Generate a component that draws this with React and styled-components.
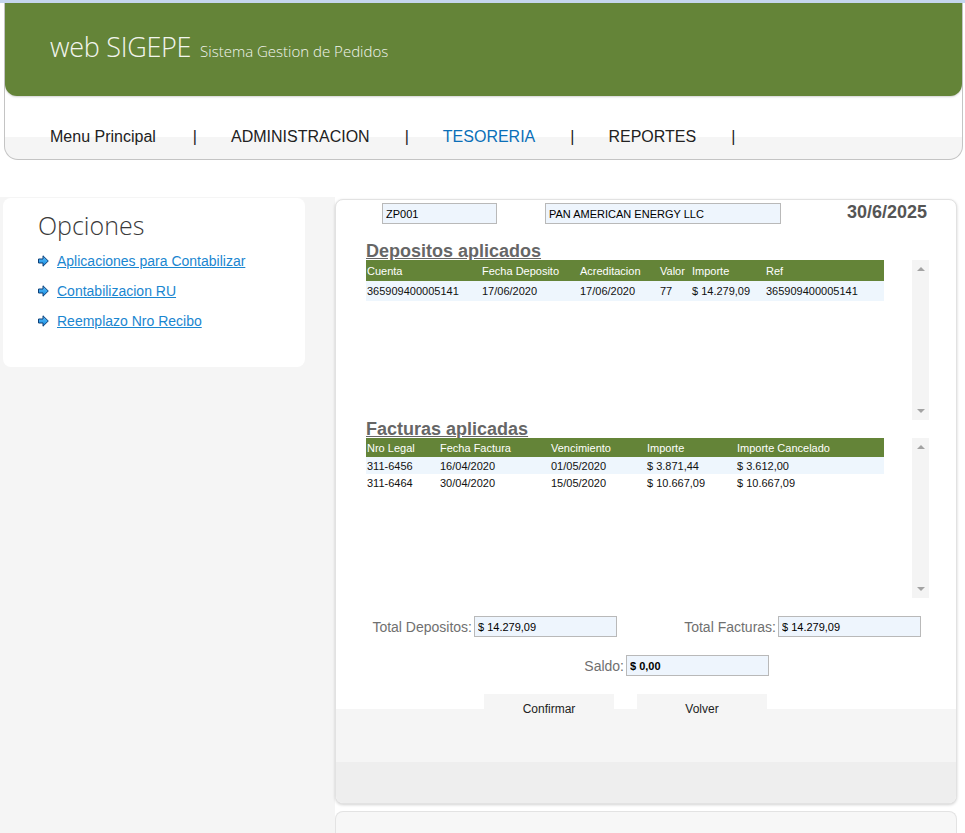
import React from "react";
import styled, { createGlobalStyle } from "styled-components";

const GlobalStyle = createGlobalStyle`
  html, body {
    margin: 0;
    padding: 0;
    background: #ffffff;
    font-family: "Liberation Sans", Arial, sans-serif;
  }
`;

const depositos = [
  {
    cuenta: "365909400005141",
    fecha: "17/06/2020",
    acreditacion: "17/06/2020",
    valor: "77",
    importe: "$ 14.279,09",
    ref: "365909400005141",
  },
];

const facturas = [
  { nro: "311-6456", fecha: "16/04/2020", venc: "01/05/2020", importe: "$ 3.871,44", cancelado: "$ 3.612,00" },
  { nro: "311-6464", fecha: "30/04/2020", venc: "15/05/2020", importe: "$ 10.667,09", cancelado: "$ 10.667,09" },
];

const depCols = [115, 98, 80, 32, 74, 119];
const facCols = [73, 111, 96, 90, 148];

const ArrowIcon = () => (
  <svg width="11" height="12" viewBox="0 0 11 12">
    <defs>
      <linearGradient id="arr" x1="0" y1="0" x2="0" y2="1">
        <stop offset="0" stopColor="#5cc3ff" />
        <stop offset="1" stopColor="#1487dc" />
      </linearGradient>
    </defs>
    <polygon
      points="0.5,4 5,4 5,0.8 10.3,6 5,11.2 5,8 0.5,8"
      fill="url(#arr)"
      stroke="#0d3f78"
      strokeWidth="1"
      strokeLinejoin="miter"
    />
  </svg>
);

const App = () => {
  return (
    <>
      <GlobalStyle />
      <TopStrip />
      <Header>
        <Banner>
          <Brand>web SIGEPE</Brand>
          <Tagline>Sistema Gestion de Pedidos</Tagline>
        </Banner>
        <Nav>
          <NavItem $gap={37}>Menu Principal</NavItem>
          <Sep>|</Sep>
          <NavItem>ADMINISTRACION</NavItem>
          <Sep>|</Sep>
          <NavItem $active>TESORERIA</NavItem>
          <Sep>|</Sep>
          <NavItem>REPORTES</NavItem>
          <Sep>|</Sep>
        </Nav>
      </Header>

      <Main>
        <Side>
          <OptionsCard>
            <OptionsTitle>Opciones</OptionsTitle>
            <OptionLink>
              <ArrowIcon />
              <a href="#">Aplicaciones para Contabilizar</a>
            </OptionLink>
            <OptionLink>
              <ArrowIcon />
              <a href="#">Contabilizacion RU</a>
            </OptionLink>
            <OptionLink>
              <ArrowIcon />
              <a href="#">Reemplazo Nro Recibo</a>
            </OptionLink>
          </OptionsCard>
        </Side>

        <Column>
          <Panel>
            <TopRow>
              <Field $w={115} value="ZP001" readOnly />
              <Field $w={236} value="PAN AMERICAN ENERGY LLC" readOnly />
              <DateLabel>30/6/2025</DateLabel>
            </TopRow>

            <Content>
              <SectionTitle $mt={18}>Depositos aplicados</SectionTitle>
              <ScrollBox>
                <Grid>
                  <colgroup>
                    {depCols.map((w, i) => (
                      <col key={i} style={{ width: w }} />
                    ))}
                  </colgroup>
                  <thead>
                    <HeadRow $h={21}>
                      <th>Cuenta</th>
                      <th>Fecha Deposito</th>
                      <th>Acreditacion</th>
                      <th>Valor</th>
                      <th>Importe</th>
                      <th>Ref</th>
                    </HeadRow>
                  </thead>
                  <tbody>
                    {depositos.map((d, i) => (
                      <Row key={i} $h={20} $alt={i % 2 === 0}>
                        <td>{d.cuenta}</td>
                        <td>{d.fecha}</td>
                        <td>{d.acreditacion}</td>
                        <td>{d.valor}</td>
                        <td>{d.importe}</td>
                        <td>{d.ref}</td>
                      </Row>
                    ))}
                  </tbody>
                </Grid>
                <ScrollBar>
                  <ArrowUp />
                  <ArrowDown />
                </ScrollBar>
              </ScrollBox>

              <SectionTitle>Facturas aplicadas</SectionTitle>
              <ScrollBox>
                <Grid>
                  <colgroup>
                    {facCols.map((w, i) => (
                      <col key={i} style={{ width: w }} />
                    ))}
                  </colgroup>
                  <thead>
                    <HeadRow $h={19}>
                      <th>Nro Legal</th>
                      <th>Fecha Factura</th>
                      <th>Vencimiento</th>
                      <th>Importe</th>
                      <th>Importe Cancelado</th>
                    </HeadRow>
                  </thead>
                  <tbody>
                    {facturas.map((f, i) => (
                      <Row key={i} $h={17} $alt={i % 2 === 0}>
                        <td>{f.nro}</td>
                        <td>{f.fecha}</td>
                        <td>{f.venc}</td>
                        <td>{f.importe}</td>
                        <td>{f.cancelado}</td>
                      </Row>
                    ))}
                  </tbody>
                </Grid>
                <ScrollBar>
                  <ArrowUp />
                  <ArrowDown />
                </ScrollBar>
              </ScrollBox>
            </Content>

            <TotalsRow>
              <TotalGroup $w={281}>
                <TotalLabel>Total Depositos:</TotalLabel>
                <Field $w={143} value="$ 14.279,09" readOnly />
              </TotalGroup>
              <TotalGroup $w={304}>
                <TotalLabel>Total Facturas:</TotalLabel>
                <Field $w={143} value="$ 14.279,09" readOnly />
              </TotalGroup>
            </TotalsRow>
            <TotalsRow>
              <TotalGroup $w={433}>
                <TotalLabel>Saldo:</TotalLabel>
                <Field $w={143} $bold value="$ 0,00" readOnly />
              </TotalGroup>
            </TotalsRow>

            <ButtonsRow>
              <Button>Confirmar</Button>
              <Button>Volver</Button>
            </ButtonsRow>
            <BottomBand />
          </Panel>
          <Footer />
        </Column>
      </Main>
    </>
  );
};

export default App;

const TopStrip = styled.div`
  height: 3px;
  background: #c5d6ee;
`;

const Header = styled.header`
  margin: 0 2px 0 4px;
  height: 156px;
  border: 1px solid #c4c4c4;
  border-top: none;
  border-radius: 0 0 14px 14px;
  background: linear-gradient(#ffffff 134px, #f5f5f5 134px);
  display: flex;
  flex-direction: column;
  overflow: hidden;
`;

const Banner = styled.div`
  height: 93px;
  background: #648438;
  border-radius: 0 0 12px 12px;
  box-shadow: 0 1px 2px rgba(0, 0, 0, 0.18);
  display: flex;
  align-items: baseline;
  padding: 25px 0 0 45px;
  box-sizing: border-box;
  color: #f2f5ee;
  font-family: "Open Sans", sans-serif;
  font-weight: 300;
`;

const Brand = styled.span`
  font-size: 27px;
  letter-spacing: -0.3px;
`;

const Tagline = styled.span`
  font-size: 15px;
  margin-left: 9px;
`;

const Nav = styled.nav`
  display: flex;
  align-items: center;
  padding: 0 0 0 45px;
  height: 40px;
  margin-top: 21px;
  font-size: 16px;
  color: #222222;
`;

const NavItem = styled.span`
  margin-right: ${(p) => p.$gap || 35}px;
  color: ${(p) => (p.$active ? "#0b6fb8" : "#222222")};
  white-space: nowrap;
`;

const Sep = styled.span`
  margin-right: 34px;
  color: #222222;
`;

const Main = styled.div`
  display: flex;
  margin-top: 37px;
  align-items: stretch;
`;

const Side = styled.aside`
  width: 335px;
  flex-shrink: 0;
  background: #f5f5f5;
  padding: 1px 30px 0 3px;
  box-sizing: border-box;
  min-height: 636px;
`;

const OptionsCard = styled.div`
  background: #ffffff;
  border-radius: 8px;
  height: 169px;
  padding: 10px 0 0 35px;
  box-sizing: border-box;
`;

const OptionsTitle = styled.h2`
  margin: 0 0 4px;
  font-family: "Open Sans", sans-serif;
  font-weight: 300;
  font-size: 25px;
  line-height: 34px;
  color: #3a3a3a;
`;

const OptionLink = styled.div`
  display: flex;
  align-items: center;
  gap: 8px;
  height: 30px;
  font-size: 14px;

  a {
    color: #1a86d0;
    text-decoration: underline;
  }
`;

const Column = styled.div`
  width: 622px;
  flex-shrink: 0;
  display: flex;
  flex-direction: column;
`;

const Panel = styled.section`
  margin-top: 2px;
  background: #ffffff;
  border: 1px solid #e2e2e2;
  border-radius: 8px;
  box-shadow: 0 1px 3px rgba(0, 0, 0, 0.18);
  overflow: hidden;
`;

const TopRow = styled.div`
  display: flex;
  align-items: flex-start;
  gap: 48px;
  padding: 3px 29px 0 46px;
`;

const Field = styled.input`
  width: ${(p) => p.$w}px;
  height: 21px;
  box-sizing: border-box;
  border: 1px solid #b9b9b9;
  background: #eef5fd;
  font-family: "Liberation Sans", Arial, sans-serif;
  font-size: 11px;
  font-weight: ${(p) => (p.$bold ? "bold" : "normal")};
  color: #000000;
  padding: 0 3px;
  margin: 0;
  outline: none;
`;

const DateLabel = styled.div`
  margin-left: auto;
  font-size: 18px;
  font-weight: bold;
  color: #555555;
  line-height: 18px;
`;

const Content = styled.div`
  padding-left: 30px;
`;

const SectionTitle = styled.h3`
  margin: ${(p) => p.$mt || 0}px 0 0;
  font-size: 18px;
  line-height: 19px;
  height: 18px;
  font-weight: bold;
  color: #666666;
  text-decoration: underline;
`;

const ScrollBox = styled.div`
  display: flex;
  height: 160px;
  width: 563px;
`;

const Grid = styled.table`
  width: 518px;
  table-layout: fixed;
  border-collapse: collapse;
  align-self: flex-start;
  font-size: 11px;

  th,
  td {
    padding: 0 0 0 1px;
    text-align: left;
    white-space: nowrap;
    overflow: hidden;
  }
  th {
    font-weight: normal;
  }
`;

const HeadRow = styled.tr`
  height: ${(p) => p.$h}px;
  background: #648438;
  color: #ffffff;
`;

const Row = styled.tr`
  height: ${(p) => p.$h}px;
  background: ${(p) => (p.$alt ? "#eef6fd" : "#ffffff")};
  color: #111111;
`;

const ScrollBar = styled.div`
  margin-left: auto;
  width: 17px;
  background: #f4f4f4;
  display: flex;
  flex-direction: column;
  justify-content: space-between;
  align-items: center;
  padding: 7px 0;
  box-sizing: border-box;
`;

const ArrowUp = styled.span`
  width: 0;
  height: 0;
  border-left: 4px solid transparent;
  border-right: 4px solid transparent;
  border-bottom: 4px solid #a3a3a3;
`;

const ArrowDown = styled.span`
  width: 0;
  height: 0;
  border-left: 4px solid transparent;
  border-right: 4px solid transparent;
  border-top: 4px solid #a3a3a3;
`;

const TotalsRow = styled.div`
  display: flex;
  margin-top: 18px;
`;

const TotalGroup = styled.div`
  width: ${(p) => p.$w}px;
  display: flex;
  justify-content: flex-end;
  align-items: center;
  gap: 2px;
`;

const TotalLabel = styled.span`
  font-size: 14px;
  color: #707070;
`;

const ButtonsRow = styled.div`
  margin-top: 18px;
  height: 68px;
  display: flex;
  align-items: flex-start;
  gap: 23px;
  padding-left: 148px;
  background: linear-gradient(#ffffff 15px, #f5f5f5 15px);
`;

const Button = styled.button`
  width: 130px;
  height: 30px;
  border: none;
  background: #f5f5f5;
  font-family: "Liberation Sans", Arial, sans-serif;
  font-size: 12px;
  color: #222222;
  padding: 0;
  cursor: pointer;
`;

const BottomBand = styled.div`
  height: 41px;
  background: #eeeeee;
`;

const Footer = styled.div`
  margin-top: 7px;
  flex: 1;
  min-height: 20px;
  border: 1px solid #e3e3e3;
  border-bottom: none;
  border-radius: 8px 8px 0 0;
  background: #f7f7f7;
`;
